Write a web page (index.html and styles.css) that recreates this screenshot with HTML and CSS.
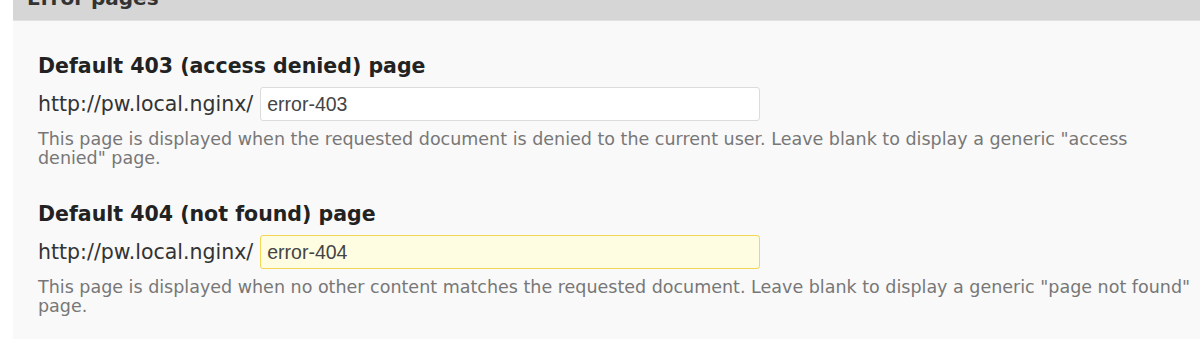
FILE: index.html
```html
<!DOCTYPE html>
<html lang="en">
<head>
    <meta charset="UTF-8">
    <title>Error pages</title>
    <link rel="stylesheet" href="styles.css">
</head>
<body>
    <div class="panel">
        <div class="panel-header">Error pages</div>
        <div class="panel-body">
            <div class="field">
                <label class="field-label" for="page403">Default 403 (access denied) page</label>
                <div class="field-row">
                    <span class="prefix">http://pw.local.nginx/</span>
                    <input type="text" id="page403" value="error-403">
                </div>
                <p class="notes">This page is displayed when the requested document is denied to the current user. Leave blank to display a generic "access denied" page.</p>
            </div>
            <div class="field">
                <label class="field-label" for="page404">Default 404 (not found) page</label>
                <div class="field-row">
                    <span class="prefix">http://pw.local.nginx/</span>
                    <input type="text" id="page404" class="changed" value="error-404">
                </div>
                <p class="notes">This page is displayed when no other content matches the requested document. Leave blank to display a generic "page not found" page.</p>
            </div>
        </div>
    </div>
</body>
</html>
```

FILE: styles.css
```css
* {
    margin: 0;
    padding: 0;
    box-sizing: border-box;
}

body {
    background-color: #fff;
    font-family: 'DejaVu Sans', sans-serif;
    color: #333;
    overflow: hidden;
}

.panel {
    margin-left: 13px;
    margin-right: -20px;
    background-color: #f9f9f9;
    border-radius: 4px 4px 0 0;
}

.panel-header {
    margin-top: -22px;
    padding: 8px 14px 10px;
    line-height: 24px;
    font-size: 20px;
    font-weight: bold;
    color: #333;
    background-color: #d6d6d6;
    border-bottom: 1px solid #e2e2e2;
    border-radius: 4px 4px 0 0;
}

.panel-body {
    padding: 33px 24px 30px 25px;
}

.field {
    margin-bottom: 34px;
}

.field:last-child {
    margin-bottom: 0;
}

.field-label {
    display: block;
    font-size: 20.5px;
    font-weight: bold;
    color: #222;
    line-height: 24px;
    margin-bottom: 9px;
}

.field-row {
    display: flex;
    align-items: center;
    gap: 7px;
}

.prefix {
    font-size: 20.5px;
    color: #333;
}

.field-row input {
    width: 500px;
    height: 34px;
    padding: 0 6px;
    font-family: 'Liberation Sans', Arial, sans-serif;
    font-size: 19.5px;
    color: #444;
    background-color: #fff;
    border: 1px solid #dcdcdc;
    border-radius: 3px;
}

.field-row input.changed {
    background-color: #fffde1;
    border-color: #f3d655;
}

.notes {
    margin-top: 9px;
    font-size: 17.5px;
    line-height: 19px;
    color: #777;
}
```
